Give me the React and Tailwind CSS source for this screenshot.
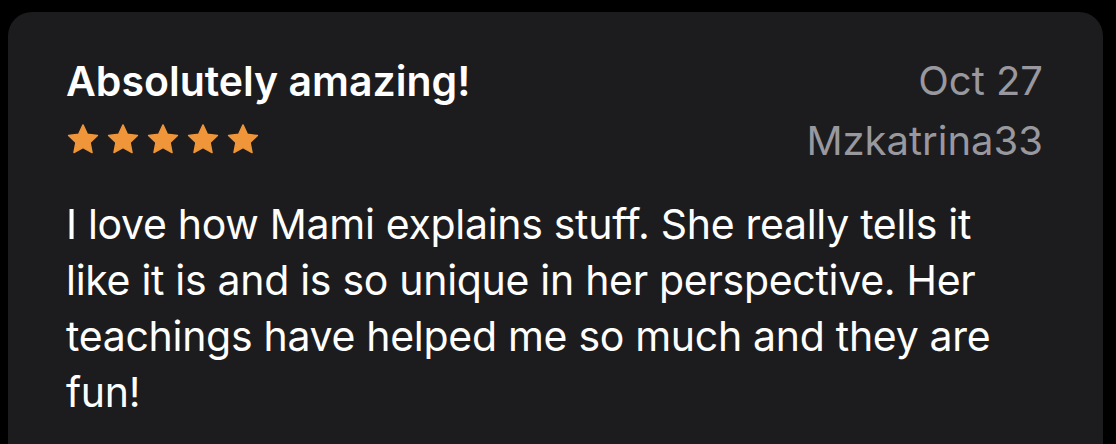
import React from "react";

function Star() {
    return (
        <svg width="34" height="33" viewBox="0 0 24 23" className="shrink-0">
            <path
                d="M12 1.2l3.1 6.6 7.1.9-5.2 4.9 1.4 7.1L12 17.2l-6.4 3.5 1.4-7.1-5.2-4.9 7.1-.9z"
                fill="#f0963a"
                stroke="#f0963a"
                strokeWidth="1"
                strokeLinejoin="round"
            />
        </svg>
    );
}

export default function App() {
    return (
        <div className="min-h-screen bg-black pt-[12px] pl-[8px] pr-[13px] font-['Inter',sans-serif] overflow-hidden">
            <div className="rounded-[24px] bg-[#1c1c1e] pl-[58px] pr-[60px] pt-[47px] pb-[60px] min-h-[460px]">
                {/* Header */}
                <div className="flex justify-between items-start">
                    <div className="flex flex-col">
                        <span className="text-[41px] leading-[44px] font-semibold text-white">
                            Absolutely amazing!
                        </span>
                        <div className="flex gap-[6px] mt-[20px]">
                            <Star />
                            <Star />
                            <Star />
                            <Star />
                            <Star />
                        </div>
                    </div>
                    <div className="flex flex-col items-end text-[#98989e]">
                        <span className="text-[40px] leading-[44px]">Oct 27</span>
                        <span className="text-[40px] leading-[44px] mt-[16px]">Mzkatrina33</span>
                    </div>
                </div>

                {/* Review body */}
                <p className="mt-[33px] text-[41px] leading-[56px] tracking-[-0.3px] text-white">
                    I love how Mami explains stuff. She really tells it like it is and is so unique in her
                    perspective. Her teachings have helped me so much and they are fun!
                </p>
            </div>
        </div>
    );
}
